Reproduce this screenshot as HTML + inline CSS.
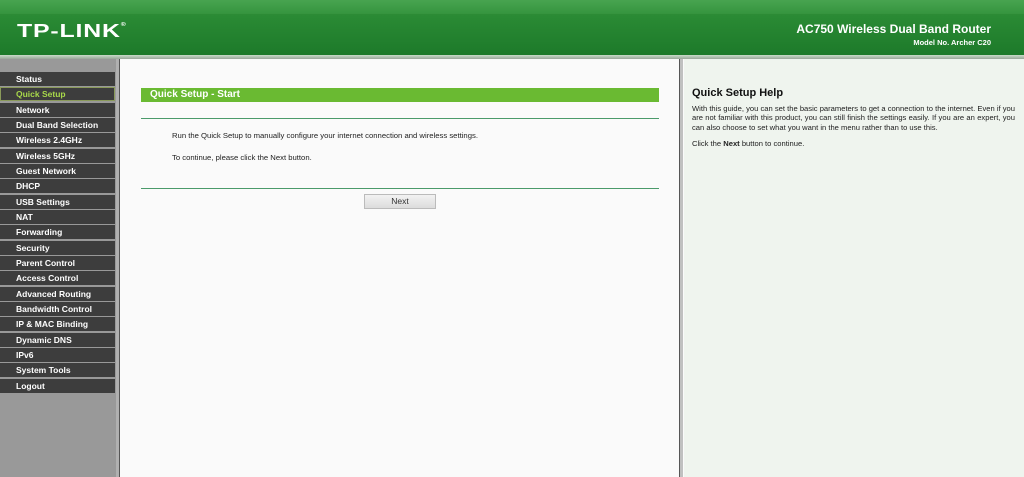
<!DOCTYPE html>
<html><head><style>
*{margin:0;padding:0;box-sizing:border-box}
body{width:1024px;height:477px;overflow:hidden;font-family:"Liberation Sans",sans-serif;background:#fafafa;position:relative}
#hdr{position:absolute;left:0;top:0;width:1024px;height:55px;background:linear-gradient(180deg,#3a9640 0%,#2a8a34 30%,#1d7a2a 100%)}
#hdr .top{position:absolute;left:0;top:0;width:100%;height:14px;background:linear-gradient(180deg,#48a450,#35943e)}
#logo{position:absolute;left:17px;top:21px;color:#fff;font-weight:bold;font-size:18px;letter-spacing:0.6px;font-family:"Liberation Sans",sans-serif;transform:scaleX(1.38);transform-origin:left top}
#logo sup{font-size:5px;vertical-align:top;position:relative;top:1px}
#t1{position:absolute;right:33px;top:22px;color:#fff;font-weight:bold;font-size:12px}
#t2{position:absolute;right:33px;top:38px;color:#fff;font-weight:bold;font-size:7.5px}
#sep{position:absolute;left:0;top:55px;width:1024px;height:4px;background:linear-gradient(180deg,#c9dcc9,#9aa89a)}
#side{position:absolute;left:0;top:59px;width:117px;height:418px;background:#999}
#side div{position:absolute;left:0;width:115px;height:14px;background:#3d3d3d;color:#fff;font-weight:bold;font-size:8.5px;line-height:14px;padding-left:16px}
#side div.on{color:#a8d84a;border:1px solid #8a9a5a;line-height:12px;padding-left:15px}
#d1{position:absolute;left:116px;top:59px;width:4px;height:418px;background:#b0b0b0;border-right:1px solid #555}
#main{position:absolute;left:121px;top:59px;width:558px;height:418px;background:#fafafa}
#d2{position:absolute;left:679px;top:59px;width:4px;height:418px;background:#c0c0c0;border-left:1px solid #555}
#help{position:absolute;left:684px;top:59px;width:340px;height:418px;background:#eff4ee}
.bar{position:absolute;left:141px;top:88px;width:518px;height:14px;background:#6aba32;color:#fff;font-weight:bold;font-size:10px;line-height:14px;padding-left:9px}
.ln{position:absolute;left:141px;width:518px;height:1px;background:#4a9a6a}
.tx{position:absolute;left:172px;font-size:7.7px;color:#222}
#btn{position:absolute;left:364px;top:194px;width:72px;height:15px;border:1px solid #bbb;background:linear-gradient(#f2f2f2,#dcdcdc);font-size:8.5px;color:#333;text-align:center;line-height:13px}
#h1{position:absolute;left:692px;top:87px;font-size:11px;font-weight:bold;color:#111}
#hp{position:absolute;left:692px;top:104px;width:323px;font-size:7.6px;line-height:9.4px;color:#222;text-align:justify}
</style></head><body>
<div id="hdr"><div class="top"></div>
<div id="logo">TP-LINK<sup>®</sup></div>
<div id="t1">AC750 Wireless Dual Band Router</div>
<div id="t2">Model No. Archer C20</div></div>
<div id="sep"></div>
<div id="side">
<div style="top:13px">Status</div>
<div class="on" style="top:28px">Quick Setup</div>
<div style="top:44px">Network</div>
<div style="top:59px">Dual Band Selection</div>
<div style="top:74px">Wireless 2.4GHz</div>
<div style="top:90px">Wireless 5GHz</div>
<div style="top:105px">Guest Network</div>
<div style="top:120px">DHCP</div>
<div style="top:136px">USB Settings</div>
<div style="top:151px">NAT</div>
<div style="top:166px">Forwarding</div>
<div style="top:182px">Security</div>
<div style="top:197px">Parent Control</div>
<div style="top:212px">Access Control</div>
<div style="top:228px">Advanced Routing</div>
<div style="top:243px">Bandwidth Control</div>
<div style="top:258px">IP &amp; MAC Binding</div>
<div style="top:274px">Dynamic DNS</div>
<div style="top:289px">IPv6</div>
<div style="top:304px">System Tools</div>
<div style="top:320px">Logout</div>
</div>
<div id="d1"></div>
<div id="main"></div>
<div id="d2"></div>
<div id="help"></div>
<div class="bar">Quick Setup - Start</div>
<div class="ln" style="top:118px"></div>
<div class="tx" style="top:131px">Run the Quick Setup to manually configure your internet connection and wireless settings.</div>
<div class="tx" style="top:153px">To continue, please click the Next button.</div>
<div class="ln" style="top:188px"></div>
<div id="btn">Next</div>
<div id="h1">Quick Setup Help</div>
<div id="hp">With this guide, you can set the basic parameters to get a connection to the internet. Even if you are not familiar with this product, you can still finish the settings easily. If you are an expert, you can also choose to set what you want in the menu rather than to use this.<div style="height:7px"></div>Click the <b>Next</b> button to continue.</div>
</body></html>
